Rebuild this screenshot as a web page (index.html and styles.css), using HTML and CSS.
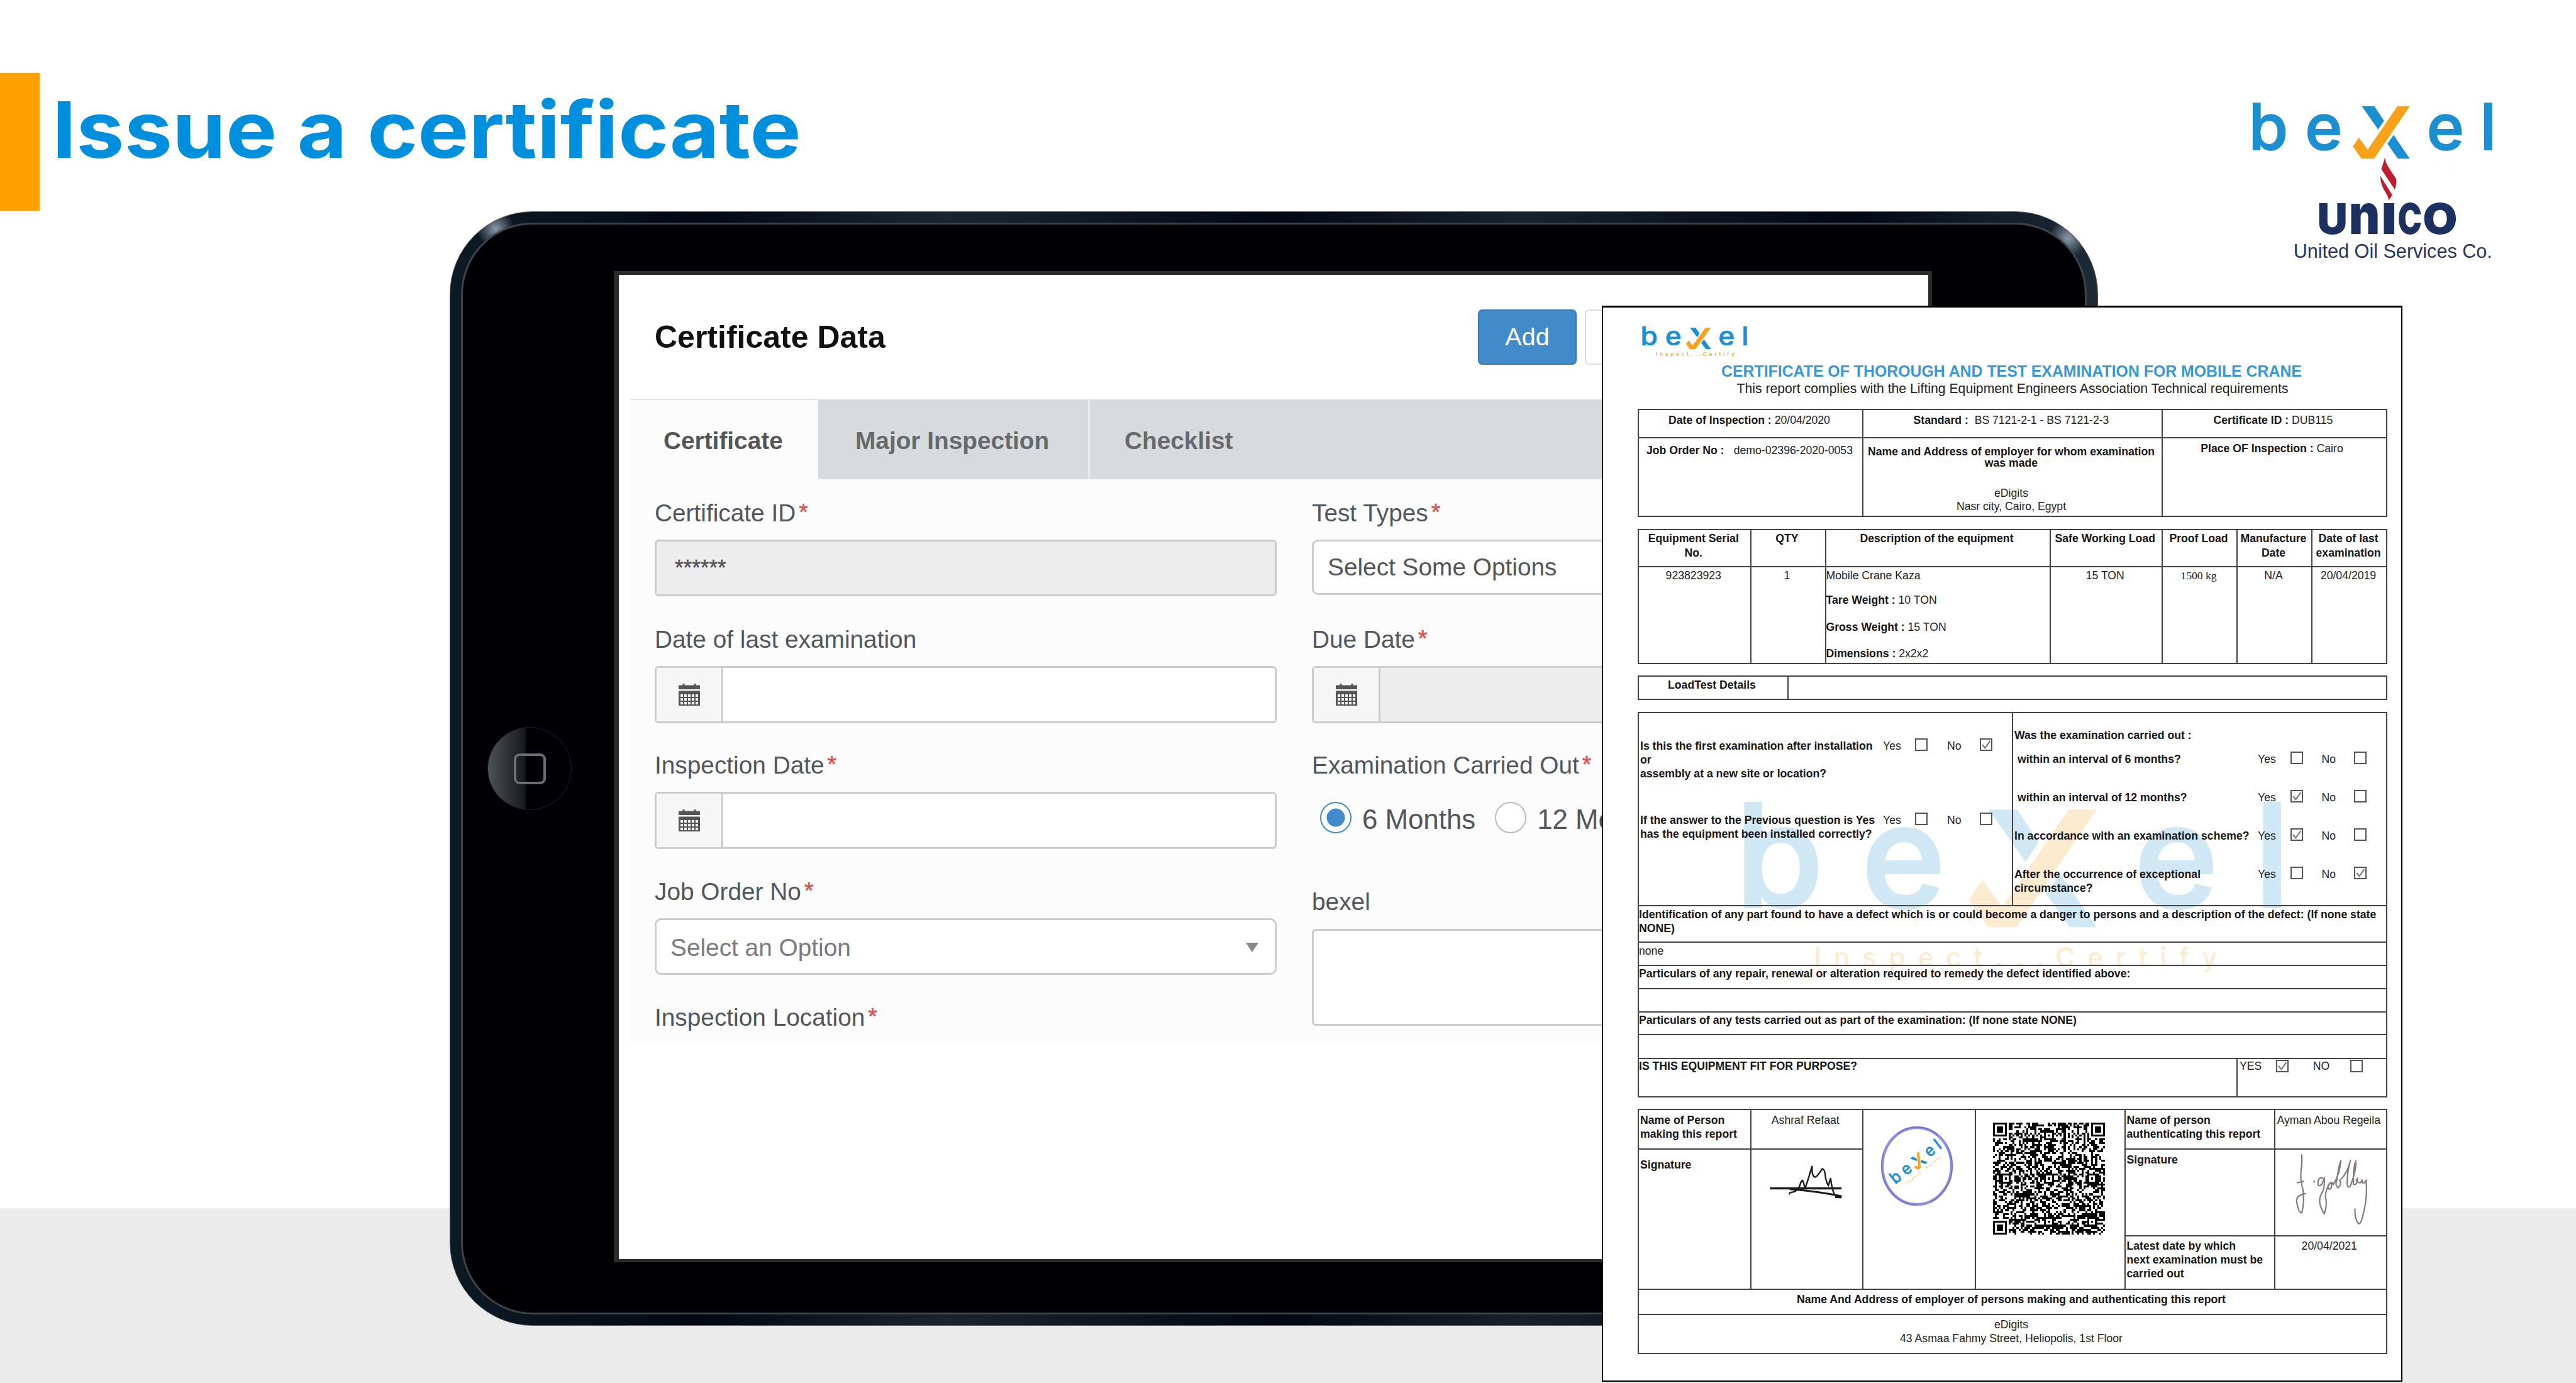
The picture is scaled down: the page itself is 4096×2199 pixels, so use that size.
FILE: index.html
```html
<!DOCTYPE html>
<html lang="en">
<head>
<meta charset="utf-8">
<title>Issue a certificate</title>
<link rel="stylesheet" href="styles.css">
</head>
<body>
<svg class="defs" width="0" height="0" aria-hidden="true">
  <defs>
    <symbol id="bexel-mark" viewBox="110 80 570 180" preserveAspectRatio="none">
      <g class="logo-blue">
        <text class="logo-letter" x="112" y="190">b</text>
        <text class="logo-letter" x="240" y="190">e</text>
        <path d="M369.4 91H398L420 124.3L406.6 144.3ZM441.8 156.7L478.6 210.7H451.5L427.6 176.7Z"/>
        <text class="logo-letter" x="517" y="190">e</text>
        <text class="logo-letter" x="638.500" y="190">l</text>
      </g>
      <path class="logo-orange" d="M450.5 91H478.6L397.4 210.7H368.4L349 182.7L362.8 162.7L382.7 190.3Z"/>
      <text class="logo-orange logo-tag" x="192" y="251" textLength="409">Inspect...Certify</text>
    </symbol>
    <symbol id="calendar" viewBox="0 0 34 35">
      <path fill="#555" d="M0 2.5h6.5V0h3v2.500h15V0h3v2.500H34V9H0zM0 11.500h34V35H0z"/>
      <g fill="#f6f6f6">
        <path d="M3 17h4v4H3zM9 17h4v4H9zM15 17h4v4h-4zM21 17h4v4h-4zM27 17h4v4h-4z"/>
        <path d="M3 23h4v4H3zM9 23h4v4H9zM15 23h4v4h-4zM21 23h4v4h-4zM27 23h4v4h-4z"/>
        <path d="M3 29h4v4H3zM9 29h4v4H9zM15 29h4v4h-4zM21 29h4v4h-4zM27 29h4v4h-4z"/>
      </g>
    </symbol>
    <symbol id="tick" viewBox="0 0 15 15">
      <path d="M2 7.500L6 12.500L13.500 2" fill="none" stroke="#777" stroke-width="2"/>
    </symbol>
  </defs>
</svg>

<div class="slide">
  <header class="slide-head">
    <span class="accent"></span>
    <h1 class="slide-title">Issue a certificate</h1>
    <svg class="brand" viewBox="0 0 800 500">
      <svg x="110" y="80" width="570" height="150.500" viewBox="0 0 570 150.500" overflow="hidden">
        <use href="#bexel-mark" width="570" height="180"/>
      </svg>
      <g fill="#be1e2d">
        <path d="M422 207C420 217 416 226 413.800 234.500L444.500 281C447 274 449 264 447.500 257C442 245 422 225 422 207Z"/>
        <path d="M411.700 250L438.300 292.600C436 298 432 302 430.500 305.600C431 292 411 278 411.700 250Z"/>
      </g>
      <g class="unico">
        <text x="268" y="382.500" textLength="69" lengthAdjust="spacingAndGlyphs">U</text>
        <text class="unico-n" x="340" y="382.500" textLength="71" lengthAdjust="spacingAndGlyphs">n</text>
        <text x="414" y="382.500" textLength="35" lengthAdjust="spacingAndGlyphs">I</text>
        <text x="451" y="382.500" textLength="55" lengthAdjust="spacingAndGlyphs">C</text>
        <text x="508" y="382.500" textLength="79" lengthAdjust="spacingAndGlyphs">O</text>
      </g>
      <text class="unico-sub" x="214" y="436.700" textLength="452">United Oil Services Co.</text>
    </svg>
  </header>

  <section class="tablet">
    <div class="bezel">
      <div class="home"><span class="home-key"></span></div>
      <div class="screen">
        <div class="app">
          <div class="app-head">
            <h2 class="app-title">Certificate Data</h2>
            <button class="btn btn-primary">Add</button>
            <button class="btn btn-plain"></button>
          </div>
          <nav class="tabs">
            <span class="tab active">Certificate</span>
            <span class="tab second">Major Inspection</span>
            <span class="tab third">Checklist</span>
          </nav>
          <div class="form">
            <div class="col">
              <div class="field"><label>Certificate ID<i>*</i></label><div class="input off stars">******</div></div>
              <div class="field"><label>Date of last examination</label><div class="input"><span class="addon"><svg><use href="#calendar"/></svg></span></div></div>
              <div class="field"><label>Inspection Date<i>*</i></label><div class="input"><span class="addon"><svg><use href="#calendar"/></svg></span></div></div>
              <div class="field"><label>Job Order No<i>*</i></label><div class="input select muted">Select an Option<span class="caret"></span></div></div>
              <div class="field"><label>Inspection Location<i>*</i></label></div>
            </div>
            <div class="col">
              <div class="field"><label>Test Types<i>*</i></label><div class="input select some">Select Some Options</div></div>
              <div class="field"><label>Due Date<i>*</i></label><div class="input off"><span class="addon"><svg><use href="#calendar"/></svg></span></div></div>
              <div class="field tall"><label>Examination Carried Out<i>*</i></label>
                <div class="radios"><span class="radio on"></span><span class="radio-text">6 Months</span><span class="radio"></span><span class="radio-text">12 Months</span></div>
              </div>
              <div class="field"><label>bexel</label><div class="input area"></div></div>
            </div>
          </div>
        </div>
      </div>
    </div>
  </section>

  <article class="cert">
    <svg class="watermark"><use href="#bexel-mark" width="893" height="281.400"/></svg>
    <header class="cert-head">
      <svg class="cert-logo"><use href="#bexel-mark" width="174" height="50.800"/></svg>
      <h3>CERTIFICATE OF THOROUGH AND TEST EXAMINATION FOR MOBILE CRANE</h3>
      <p>This report complies with the Lifting Equipment Engineers Association Technical requirements</p>
    </header>

    <div class="grid info">
      <div class="cell"><b>Date of Inspection :</b> 20/04/2020</div>
      <div class="cell"><b>Standard :</b>&nbsp; BS 7121-2-1 - BS 7121-2-3</div>
      <div class="cell"><b>Certificate ID :</b> DUB115</div>
      <div class="cell job"><b>Job Order No :</b><span>demo-02396-2020-0053</span></div>
      <div class="cell employer"><b>Name and Address of employer for whom examination<br>was made</b><p>eDigits<br>Nasr city, Cairo, Egypt</p></div>
      <div class="cell place"><b>Place OF Inspection :</b> Cairo</div>
    </div>

    <div class="grid equip">
      <div class="cell th">Equipment Serial<br>No.</div>
      <div class="cell th">QTY</div>
      <div class="cell th">Description of the equipment</div>
      <div class="cell th">Safe Working Load</div>
      <div class="cell th">Proof Load</div>
      <div class="cell th">Manufacture<br>Date</div>
      <div class="cell th">Date of last<br>examination</div>
      <div class="cell">923823923</div>
      <div class="cell">1</div>
      <div class="cell desc"><p>Mobile Crane Kaza</p><p><b>Tare Weight :</b> 10 TON</p><p><b>Gross Weight :</b> 15 TON</p><p><b>Dimensions :</b> 2x2x2</p></div>
      <div class="cell">15 TON</div>
      <div class="cell serif">1500 kg</div>
      <div class="cell">N/A</div>
      <div class="cell">20/04/2019</div>
    </div>

    <div class="grid load">
      <div class="cell"><b>LoadTest Details</b></div>
      <div class="cell"></div>
    </div>

    <div class="grid exam">
      <div class="cell half q-left">
        <div class="q"><b>Is this the first examination after installation<br>or<br>assembly at a new site or location?</b><span>Yes</span><em></em><span>No</span><em><svg><use href="#tick"/></svg></em></div>
        <div class="q"><b>If the answer to the Previous question is Yes<br>has the equipment been installed correctly?</b><span>Yes</span><em></em><span>No</span><em></em></div>
      </div>
      <div class="cell half q-right">
        <p><b>Was the examination carried out :</b></p>
        <div class="q"><b class="in">within an interval of 6 months?</b><span>Yes</span><em></em><span>No</span><em></em></div>
        <div class="q"><b class="in">within an interval of 12 months?</b><span>Yes</span><em><svg><use href="#tick"/></svg></em><span>No</span><em></em></div>
        <div class="q"><b>In accordance with an examination scheme?</b><span>Yes</span><em><svg><use href="#tick"/></svg></em><span>No</span><em></em></div>
        <div class="q"><b>After the occurrence of exceptional<br>circumstance?</b><span>Yes</span><em></em><span>No</span><em><svg><use href="#tick"/></svg></em></div>
      </div>
      <div class="cell full two"><b>Identification of any part found to have a defect which is or could become a danger to persons and a description of the defect: (If none state NONE)</b></div>
      <div class="cell full two">none</div>
      <div class="cell full"><b>Particulars of any repair, renewal or alteration required to remedy the defect identified above:</b></div>
      <div class="cell full"></div>
      <div class="cell full"><b>Particulars of any tests carried out as part of the examination: (If none state NONE)</b></div>
      <div class="cell full"></div>
      <div class="cell fit"><b>IS THIS EQUIPMENT FIT FOR PURPOSE?</b></div>
      <div class="cell fit-answer"><span>YES</span><em><svg><use href="#tick"/></svg></em><span>NO</span><em></em></div>
    </div>

    <div class="grid sign">
      <div class="cell left"><b>Name of Person<br>making this report</b></div>
      <div class="cell">Ashraf Refaat</div>
      <div class="cell stamp">
        <svg viewBox="0 0 116 128">
          <ellipse cx="58" cy="64" rx="55" ry="61" fill="none" stroke="#8f90dc" stroke-width="4.500"/>
          <ellipse cx="58" cy="64" rx="56" ry="62" fill="none" stroke="#6f72cf" stroke-width="1.500" stroke-dasharray="70 24 110 40"/>
          <g transform="translate(58 60) rotate(-38)"><use href="#bexel-mark" x="-48" y="-15" width="97" height="33"/></g>
        </svg>
      </div>
      <div class="cell qr"><svg id="qr" viewBox="0 0 57 57" shape-rendering="crispEdges"></svg></div>
      <div class="cell left"><b>Name of person<br>authenticating this report</b></div>
      <div class="cell nowrap">Ayman Abou Regeila</div>
      <div class="cell left sig-label"><b>Signature</b></div>
      <div class="cell sig-a">
        <svg viewBox="590 395 275 190" preserveAspectRatio="none">
          <path d="M600 526H855" stroke-width="3.500"/>
          <path d="M668 558L672 548Q695 548 705 515Q712 480 716 483Q722 500 724 530Q738 470 750 405Q748 465 762 465Q772 455 786 420Q796 420 798 470Q804 505 808 510L816 470Q820 530 830 560L855 570" stroke-width="2.400"/>
          <path d="M670 530Q760 540 855 568M832 572L855 575" stroke-width="3"/>
        </svg>
      </div>
      <div class="cell left sig-right"><b>Signature</b></div>
      <div class="cell sig-b">
        <svg viewBox="1155 330 270 395" preserveAspectRatio="none">
          <path d="M1185 338Q1188 380 1183 430Q1180 480 1190 530Q1196 590 1186 655Q1174 655 1168 595Q1164 560 1200 550M1168 492L1194 484"/>
          <path d="M1228 480L1230 492M1262 470Q1246 455 1242 490Q1242 520 1256 500L1264 470Q1268 520 1252 560Q1240 600 1264 660Q1276 620 1268 560Q1272 520 1284 495Q1296 495 1286 525Q1274 530 1278 505Q1290 480 1296 500Q1320 440 1322 370Q1312 420 1308 480Q1300 500 1312 520Q1326 500 1318 480Q1346 440 1356 368Q1344 430 1344 500Q1350 540 1362 480Q1376 420 1374 372Q1364 420 1366 500Q1378 510 1380 470Q1370 480 1384 490Q1392 500 1396 475Q1396 510 1410 480Q1416 560 1402 650Q1392 720 1384 714Q1370 690 1371 632"/>
        </svg>
      </div>
      <div class="cell left latest"><b>Latest date by which<br>next examination must be<br>carried out</b></div>
      <div class="cell latest-date">20/04/2021</div>
      <div class="cell all"><b>Name And Address of employer of persons making and authenticating this report</b></div>
      <div class="cell all">eDigits<br>43 Asmaa Fahmy Street, Heliopolis, 1st Floor</div>
    </div>
  </article>
</div>
<script src="qr.js"></script>
</body>
</html>
```
FILE: styles.css
```css
* { box-sizing: border-box; margin: 0; padding: 0; }
body { font-family: "Liberation Sans", Arial, sans-serif; background: #fff; }
.defs { position: absolute; }
.slide {
  position: relative; width: 4096px; height: 2199px; overflow: hidden;
  background: linear-gradient(#fff 1921px, #ebebeb 1921px);
}

/* slide heading */
.slide-head { display: flex; align-items: flex-start; height: 480px; }
.accent { width: 63px; height: 219px; margin-top: 116px; background: #ffa000; }
.slide-title {
  margin: 131px 0 0 20px; font: 700 124px/150px Inter, sans-serif; color: #008fdd;
  white-space: nowrap; transform: scaleX(1.1); transform-origin: 0 0; font-variant-ligatures: none;
}
.brand { width: 559.6px; height: 349.7px; margin: 105px 39px 0 auto; }
.logo-blue { fill: #1b8fd0; }
.logo-orange { fill: #f9a11b; }
.logo-letter { font: 500 145px Inter, sans-serif; stroke: #1b8fd0; stroke-width: 2.500px; }
.logo-tag { font: 500 27px Inter, sans-serif; }
.brand .logo-tag { font-size: 27px; }
.unico { fill: #1d3160; font: 900 96.800px Inter, sans-serif; }
.unico-n { font-size: 127px; font-weight: 900; }
.unico-sub { fill: #27355f; font: 43.800px "Liberation Sans", Arial, sans-serif; }

/* tablet */
.tablet {
  position: absolute; left: 715px; top: 336px; width: 2621px; height: 1772px;
  padding: 17px; border-radius: 132px; border: 1px solid #4f5a62;
  background:
    radial-gradient(circle 30px at 72px 27px, #8b98a6, transparent),
    radial-gradient(circle 30px at 2572px 42px, #8b98a6, transparent),
    linear-gradient(90deg, #0d1a24, #020813 15%, #1a2430 30%, #020813 50%, #17202c 65%, #020813 85%, #1e2a36);
}
.bezel {
  display: flex; align-items: center; height: 100%; border: 3px solid #3c4449;
  border-radius: 114px; background: #000004;
}
.home {
  display: flex; align-items: center; justify-content: center; flex: none;
  width: 134px; height: 132px; margin: 0 67px 0 39px; border-radius: 50%; border: 1px solid #1c1e20;
  background: linear-gradient(90deg, #4d5256, #15191c 45%, #000004 45.500%);
}
.home-key { width: 51px; height: 49px; border: 4px solid #6c6e70; border-radius: 9px; }
.screen {
  align-self: flex-start; width: 2096px; height: 1576px; margin-top: 74px;
  border: solid #2b2b2c; border-width: 6px 6px 5px 8px; background: #fff;
}
.app { margin-left: 17px; }
.app-head { display: flex; align-items: center; height: 199px; padding-left: 40px; border-bottom: 2px solid #e6e6e6; }
.app-title { width: 1309px; padding-top: 1px; font-size: 50px; color: #111; }
.btn { height: 88px; border-radius: 7px; font: 39.500px "Liberation Sans", Arial, sans-serif; }
.btn-primary { width: 157px; margin-right: 13px; color: #fff; background: #428bca; border: 2px solid #3c79ae; }
.btn-plain { width: 180px; background: #fff; border: 2px solid #dcdcdc; }
.tabs { display: flex; height: 126px; font-size: 38.800px; font-weight: 700; line-height: 129px; background: #d7dbdd; }
.tab { padding-left: 54px; color: #676a6c; }
.tab.active { width: 300px; color: #555; background: #fcfcfc; }
.tab.second { width: 432px; padding-left: 59px; border-right: 3px solid #e9ecee; }
.tab.third { padding-left: 55px; }
.form { display: flex; gap: 57px; height: 898px; padding: 32px 40px 0; background: #fcfcfc; overflow: hidden; }
.col { flex: none; width: 989px; margin-right: -1px; }
.field { height: 200.500px; }
.field.tall { height: 216.800px; }
label { display: block; height: 44px; margin-bottom: 20px; font-size: 38.800px; line-height: 44px; color: #50565d; }
label i { margin-left: 5px; font-style: normal; font-size: 37px; position: relative; top: -2px; color: #d9534f; -webkit-text-stroke: .6px #d9534f; }
.input {
  display: flex; align-items: center; height: 91px; border: 3px solid #ccc; border-radius: 6px;
  background: #fff; font-size: 38.800px; color: #555;
}
.input.off { background: #ededed; }
.input.stars { height: 90px; padding: 0 0 2px 29px; font-size: 35px; -webkit-text-stroke: .6px #555; }
.input.select { height: 90px; padding: 4px 0 0 22px; border-radius: 10px; }
.input.some { height: 88px; padding-top: 0; }
.input.muted { color: #7b7b7b; }
.input.area { height: 154px; margin-top: 21px; }
.caret { margin: 0 26px 0 auto; border: 10px solid transparent; border-top: 15px solid #888; border-bottom: 0; }
.addon {
  display: flex; align-items: center; justify-content: center; width: 106px; height: 100%;
  border-right: 3px solid #ccc; background: #f6f6f6;
}
.addon svg { width: 34px; height: 35px; }
.radios { display: flex; align-items: center; height: 62px; margin-top: 30px; padding: 0 0 0 13px; white-space: nowrap; color: #50565d; font-size: 43.800px; }
.radio { width: 50px; height: 50px; flex: none; margin-right: 17px; border: 2px solid #bbb; border-radius: 50%; background: #fff; }
.radio.on { border-color: #428bca; background: radial-gradient(#428bca 14px, #fff 15px); }
.radio-text { padding-top: 6px; margin-right: 31px; }

/* certificate */
.cert {
  position: absolute; left: 2547px; top: 486px; width: 1273px; height: 1711px; padding: 0 0 0 55px;
  border: 2px solid #000; border-top-width: 3px; background: #fff; color: #222;
  font-size: 17.650px; line-height: 20px;
}
.cert b { color: #151515; }
.watermark { position: absolute; left: 207px; top: 781px; width: 893px; height: 282px; opacity: .2; }
.cert-head { width: 1192px; height: 161px; padding-top: 29px; text-align: center; position: relative; }
.cert-logo { display: block; width: 174px; height: 51px; margin-left: 4px; }
.cert-head h3 { margin: 9px 3px 0 0; font-size: 24.850px; line-height: 26px; color: #3b97d3; white-space: nowrap; }
.cert-head p { margin-top: 2px; font-size: 21.200px; line-height: 24px; white-space: nowrap; }
.grid {
  position: relative; display: grid; width: 1192px; margin-bottom: 19px;
  border: solid #444; border-width: 2px 0 0 2px;
}
.cell { min-width: 0; padding-right: 4px; border: solid #444; border-width: 0 2px 2px 0; text-align: center; }

.info { grid-template: 45px 125px / 30fr 40fr 30fr; }
.info .cell { padding-top: 6px; }
.info .job { display: flex; justify-content: space-between; padding: 9px 15px 0 12px; }
.info .employer { padding-top: 13px; line-height: 17.500px; white-space: nowrap; }
.employer p { margin-top: 29px; line-height: 21px; }
.info .place { padding-right: 8px; }

.equip { grid-template: 59px 154px / 15fr 10fr 30fr 15fr 10fr 10fr 10fr; margin-bottom: 18px; }
.equip .cell { padding-top: 3px; padding-right: 3px; white-space: nowrap; }
.equip .th { padding-top: 2px; font-weight: 700; line-height: 22.500px; color: #151515; }
.equip .desc { text-align: left; }
.desc p + p { margin-top: 19px; }
.desc p + p + p { margin-top: 22.600px; }
.equip .serif { font-family: "Liberation Serif", serif; }

.load { grid-template: 37px / 20fr 80fr; }
.load .cell { padding-top: 3px; }

.exam { grid-template: 307px 58px 37px 37px 37px 36px 38px 61px / 50fr 30fr 20fr; margin-bottom: 18px; line-height: 22px; }
.exam .cell { padding-top: 1px; text-align: left; }
.exam .full { grid-column: 1 / -1; }
.exam .two { padding-top: 2px; }
.exam .q-left { padding: 41px 0 0 2px; }
.exam .q-right { grid-column: 2 / 4; padding: 25px 0 0 2px; }
.q { display: grid; grid-template-columns: 386px 51px 51px 51.500px 19px; height: 118px; white-space: nowrap; }
.q-right p { height: 20px; margin-bottom: 17px; line-height: 20px; }
.q-right .q { grid-template-columns: 387px 51.500px 50px 51.500px 19px; height: 61px; }
.q .in { padding-left: 5px; }
.cell em { display: block; width: 20px; height: 20px; margin-top: -1px; border: 2px solid #555; }
.cell em svg { display: block; width: 16px; height: 16px; }
.exam .fit { grid-column: 1 / 3; padding-top: 0; }
.exam .fit-answer { display: grid; grid-template-columns: 58px 58.700px 59.700px 19px; padding: 0 0 0 3px; }
.fit-answer em { margin-top: 1px; }

.sign { grid-template: 63px 138px 85px 40px 62px / 15fr 15fr 15fr 20fr 20fr 15fr; margin-bottom: 0; line-height: 22px; }
.sign .cell { padding-top: 5px; white-space: nowrap; }
.sign .left { padding-left: 2px; text-align: left; }
.sign .stamp { grid-row: 1 / 4; padding: 25px 0 0 27px; text-align: left; }
.stamp svg { display: block; width: 116px; height: 128px; }
.sign .qr { grid-row: 1 / 4; padding: 20px 0 0 27px; }
.qr svg { display: block; width: 178px; height: 178px; }
.sign .sig-label { grid-area: 2 / 1 / 4 / 2; padding-top: 13px; }
.sign .sig-a { grid-area: 2 / 2 / 4 / 3; padding: 23px 0 0 25px; }
.sig-a svg { display: block; width: 122.700px; height: 56px; fill: none; stroke: #1c1c1c; }
.sig-a path, .sig-b path { vector-effect: non-scaling-stroke; }
.sign .sig-right { grid-area: 2 / 5; }
.sign .sig-b { grid-area: 2 / 6; padding: 5px 0 0 28px; }
.sig-b svg { display: block; width: 123px; height: 116px; fill: none; stroke: #85797f; stroke-width: 2.200px; }
.sign .nowrap { padding-right: 6px; }
.sign .latest { grid-area: 3 / 5; padding-top: 4px; }
.sign .latest-date { grid-area: 3 / 6; padding-top: 4px; }
.sign .all { grid-column: 1 / -1; padding-top: 4px; }
```
FILE: qr.js
```js
// Fills the QR panel: finder, alignment and timing patterns over a seeded module field.
(function () {
  var n = 57, seed = 20042020, d = "";
  function rnd() { seed = (seed * 1103515245 + 12345) % 2147483648; return seed / 2147483648; }
  var finders = [[0, 0], [n - 7, 0], [0, n - 7]];
  var aligns = [[28, 6], [6, 28], [28, 28], [50, 28], [28, 50], [50, 50]];
  function dark(x, y) {
    for (var i = 0; i < 3; i++) {
      var fx = x - finders[i][0], fy = y - finders[i][1];
      if (fx >= -1 && fx <= 7 && fy >= -1 && fy <= 7) {
        var r = Math.max(Math.abs(fx - 3), Math.abs(fy - 3));
        return r === 3 || r <= 1;
      }
    }
    for (var j = 0; j < aligns.length; j++) {
      var a = Math.max(Math.abs(x - aligns[j][0]), Math.abs(y - aligns[j][1]));
      if (a <= 2) return a !== 1;
    }
    if (x === 6) return y % 2 === 0;
    if (y === 6) return x % 2 === 0;
    return rnd() < 0.52;
  }
  for (var y = 0; y < n; y++)
    for (var x = 0; x < n; x++)
      if (dark(x, y)) d += "M" + x + " " + y + "h1v1h-1z";
  var p = document.createElementNS("http://www.w3.org/2000/svg", "path");
  p.setAttribute("d", d);
  document.getElementById("qr").appendChild(p);
})();
```
